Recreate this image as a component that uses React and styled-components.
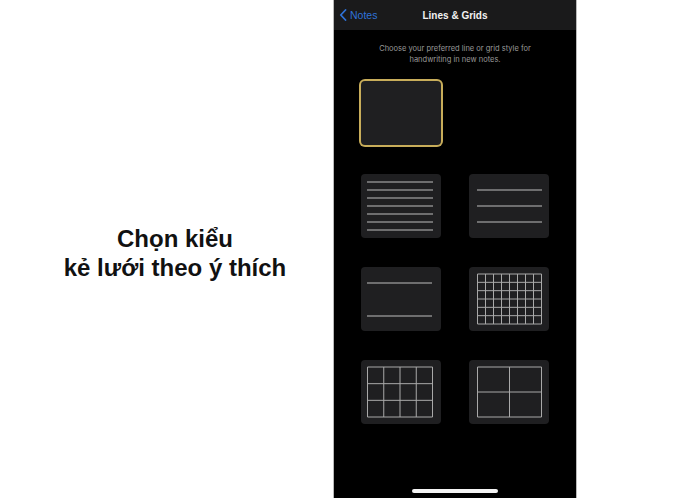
import React from "react";
import styled, { createGlobalStyle } from "styled-components";

const GlobalStyle = createGlobalStyle`
  html, body {
    margin: 0;
    padding: 0;
    background: #fff;
  }
`;

const Page = styled.div`
  width: 700px;
  height: 498px;
  display: flex;
  overflow: hidden;
  background: #fff;
`;

const Caption = styled.div`
  width: 333px;
  display: flex;
  align-items: center;
  justify-content: center;
  padding-left: 17px;
  padding-top: 8px;
  box-sizing: border-box;
`;

const CaptionText = styled.h1`
  margin: 0;
  font-family: "Liberation Sans", Arial, sans-serif;
  font-weight: 700;
  font-size: 24px;
  line-height: 29px;
  color: #111;
  text-align: center;
`;

const Phone = styled.div`
  width: 242px;
  height: 498px;
  background: #000;
  border-left: 1px solid #b9b9b9;
  border-right: 1px solid #b9b9b9;
  display: flex;
  flex-direction: column;
  font-family: "Liberation Sans", Arial, sans-serif;
`;

const NavBar = styled.div`
  height: 30px;
  background: #1a1a1b;
  display: grid;
  grid-template-columns: 1fr auto 1fr;
  align-items: center;
  padding: 0 5px;
`;

const BackButton = styled.div`
  display: flex;
  align-items: center;
  gap: 3px;
  color: #2f72d8;
  font-size: 10.5px;
`;

const Title = styled.div`
  color: #f2f2f2;
  font-size: 10px;
  font-weight: 700;
`;

const Hint = styled.p`
  margin: 13px 0 0;
  text-align: center;
  color: #9a9a9a;
  font-family: Inter, "Liberation Sans", sans-serif;
  font-size: 7.5px;
  line-height: 11px;
`;

const Styles = styled.div`
  display: grid;
  grid-template-columns: 80px 80px;
  grid-auto-rows: 64px;
  column-gap: 28px;
  row-gap: 29px;
  padding: 0 27px;
  margin-top: 16px;
`;

const Card = styled.div`
  background: #1f1f21;
  border-radius: 4px;
  box-shadow: ${(p) => (p.$selected ? "0 0 0 2px #c8ad5a" : "none")};
`;

const HomeBar = styled.div`
  margin: auto auto 5px;
  width: 86px;
  height: 4px;
  border-radius: 2px;
  background: #f4f4f4;
`;

function Lines({ ys, x1, x2 }) {
  return (
    <svg width="80" height="64" viewBox="0 0 80 64">
      {ys.map((y) => (
        <line key={y} x1={x1} x2={x2} y1={y} y2={y} stroke="#8a8a8a" strokeWidth="1.5" />
      ))}
    </svg>
  );
}

function Grid({ x1, x2, cols, rows }) {
  const y1 = 7;
  const y2 = 57;
  const vs = Array.from({ length: cols + 1 }, (_, i) => x1 + ((x2 - x1) * i) / cols);
  const hs = Array.from({ length: rows + 1 }, (_, i) => y1 + ((y2 - y1) * i) / rows);
  return (
    <svg width="80" height="64" viewBox="0 0 80 64">
      {vs.map((x) => (
        <line key={"v" + x} x1={x} x2={x} y1={y1} y2={y2} stroke="#a9a9a9" strokeWidth="1" />
      ))}
      {hs.map((y) => (
        <line key={"h" + y} x1={x1} x2={x2} y1={y} y2={y} stroke="#a9a9a9" strokeWidth="1" />
      ))}
    </svg>
  );
}

export default function App() {
  return (
    <Page>
      <GlobalStyle />
      <Caption>
        <CaptionText>
          Chọn kiểu
          <br />
          kẻ lưới theo ý thích
        </CaptionText>
      </Caption>
      <Phone>
        <NavBar>
          <BackButton>
            <svg width="8" height="12" viewBox="0 0 8 12">
              <path d="M6.5 1 L1.8 6 L6.5 11" fill="none" stroke="#2f72d8" strokeWidth="1.8" strokeLinecap="round" strokeLinejoin="round" />
            </svg>
            Notes
          </BackButton>
          <Title>Lines &amp; Grids</Title>
          <span />
        </NavBar>
        <Hint>
          Choose your preferred line or grid style for
          <br />
          handwriting in new notes.
        </Hint>
        <Styles>
          <Card $selected />
          <span />
          <Card>
            <Lines ys={[8, 16, 24, 32, 40, 48, 56]} x1={6} x2={72} />
          </Card>
          <Card>
            <Lines ys={[16, 32, 48]} x1={8} x2={73} />
          </Card>
          <Card>
            <Lines ys={[16, 49]} x1={6} x2={71} />
          </Card>
          <Card>
            <Grid x1={8.5} x2={72.5} cols={8} rows={6} />
          </Card>
          <Card>
            <Grid x1={6.5} x2={71.5} cols={4} rows={3} />
          </Card>
          <Card>
            <Grid x1={8.5} x2={72.5} cols={2} rows={2} />
          </Card>
        </Styles>
        <HomeBar />
      </Phone>
    </Page>
  );
}
